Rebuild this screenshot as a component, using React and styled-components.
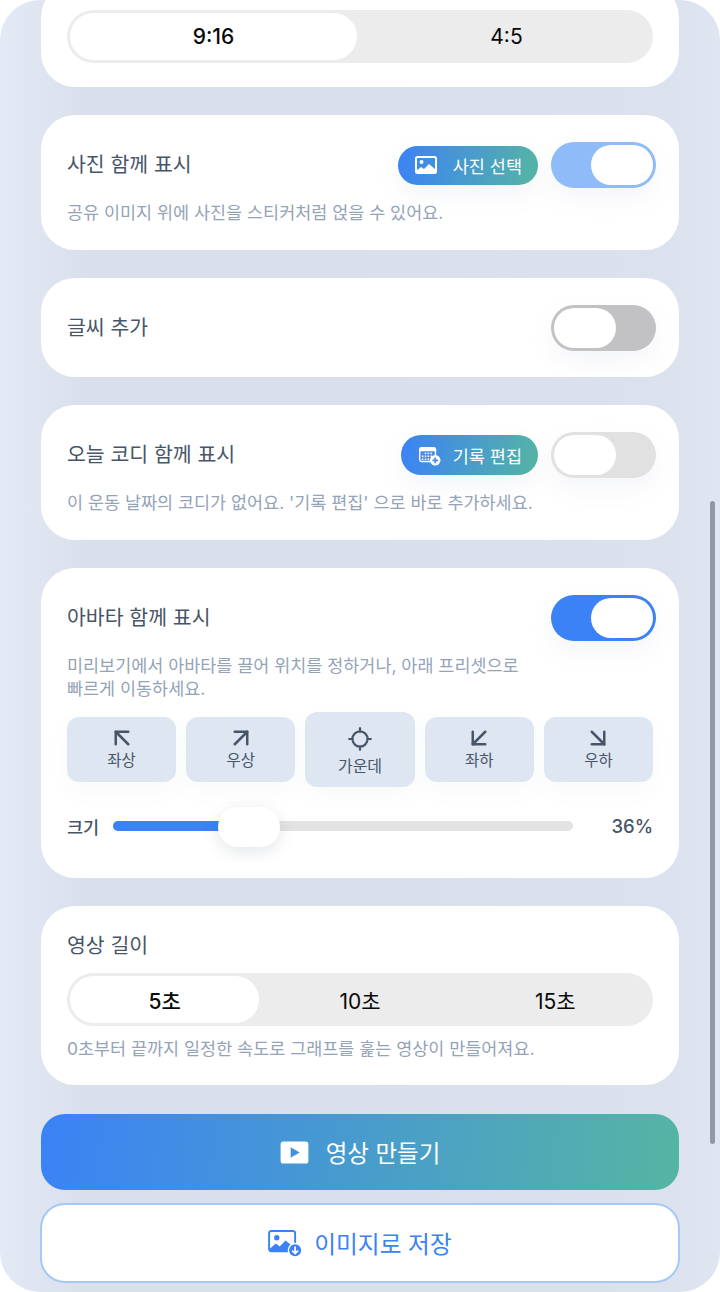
import React from 'react';
import styled, { createGlobalStyle } from 'styled-components';
import { ArrowUpLeft, ArrowUpRight, ArrowDownLeft, ArrowDownRight, Locate } from 'lucide-react';

const GlobalStyle = createGlobalStyle`
  html, body {
    margin: 0;
    padding: 0;
    background: #fff;
  }
  * {
    box-sizing: border-box;
  }
`;

const PhotoIcon = () => (
  <svg width="22" height="18" viewBox="0 0 22 18">
    <rect x="1" y="1" width="20" height="16" rx="1.5" fill="none" stroke="#fff" strokeWidth="2" />
    <circle cx="6.5" cy="6" r="2" fill="#fff" />
    <path d="M1 15l5-4 3 2 5-5 7 6v3H1z" fill="#fff" />
  </svg>
);

const CalendarIcon = () => (
  <svg width="23" height="21" viewBox="0 0 24 22">
    <rect x="1" y="2" width="18" height="16" rx="2.5" fill="#fff" />
    <rect x="2.5" y="6.5" width="15" height="10" rx="1" fill="#4a8ee4" />
    <g fill="#fff">
      <rect x="7" y="8" width="1.6" height="1.6" />
      <rect x="10" y="8" width="1.6" height="1.6" />
      <rect x="13" y="8" width="1.6" height="1.6" />
      <rect x="4" y="11" width="1.6" height="1.6" />
      <rect x="7" y="11" width="1.6" height="1.6" />
      <rect x="10" y="11" width="1.6" height="1.6" />
      <rect x="13" y="11" width="1.6" height="1.6" />
      <rect x="4" y="14" width="1.6" height="1.6" />
      <rect x="7" y="14" width="1.6" height="1.6" />
      <rect x="10" y="14" width="1.6" height="1.6" />
    </g>
    <circle cx="18" cy="16" r="5.5" fill="#fff" />
    <path d="M18 13v6M15 16h6" stroke="#4a8ee4" strokeWidth="1.8" />
  </svg>
);

const PlayIcon = () => (
  <svg width="29" height="23" viewBox="0 0 30 24">
    <rect x="0.5" y="0.5" width="29" height="23" rx="3" fill="#fff" />
    <path d="M11 6.5v11l9.5-5.5z" fill="#4390dc" />
  </svg>
);

const ImageSaveIcon = () => (
  <svg width="34" height="27" viewBox="0 0 35 28">
    <rect x="1" y="1" width="27" height="21" rx="2.5" fill="none" stroke="#3b82f6" strokeWidth="2" />
    <circle cx="9" cy="8" r="2.8" fill="#3b82f6" />
    <path d="M1 20l7-6 4 3 6-6 10 8v3H1z" fill="#3b82f6" />
    <circle cx="28" cy="21" r="7" fill="#3b82f6" stroke="#fff" strokeWidth="1.5" />
    <path d="M28 17v7M25 21.5l3 3 3-3" fill="none" stroke="#fff" strokeWidth="1.8" />
  </svg>
);

const presets = [
  { label: '좌상', Icon: ArrowUpLeft },
  { label: '우상', Icon: ArrowUpRight },
  { label: '가운데', Icon: Locate, active: true },
  { label: '좌하', Icon: ArrowDownLeft },
  { label: '우하', Icon: ArrowDownRight },
];

const App = () => (
  <Screen>
    <GlobalStyle />
    <Scroller>
      <Card $pad="27px 26px 24px">
        <Segment>
          <SegmentItem $selected>9:16</SegmentItem>
          <SegmentItem>4:5</SegmentItem>
        </Segment>
      </Card>

      <Card>
        <Row>
          <Title>사진 함께 표시</Title>
          <Actions>
            <PillButton>
              <PhotoIcon />
              사진 선택
            </PillButton>
            <Toggle $bg="#8fbcf8" $on />
          </Actions>
        </Row>
        <Hint $top="13px">공유 이미지 위에 사진을 스티커처럼 얹을 수 있어요.</Hint>
      </Card>

      <Card>
        <Row>
          <Title>글씨 추가</Title>
          <Toggle $bg="#c2c2c4" />
        </Row>
      </Card>

      <Card>
        <Row>
          <Title>오늘 코디 함께 표시</Title>
          <Actions>
            <PillButton $narrow>
              <CalendarIcon />
              기록 편집
            </PillButton>
            <Toggle $bg="#e1e1e1" />
          </Actions>
        </Row>
        <Hint $top="13px">이 운동 날짜의 코디가 없어요. '기록 편집' 으로 바로 추가하세요.</Hint>
      </Card>

      <Card $pad="27px 23px 32px 26px">
        <Row>
          <Title>아바타 함께 표시</Title>
          <Toggle $bg="#3b82f6" $on />
        </Row>
        <Hint $top="13px">
          미리보기에서 아바타를 끌어 위치를 정하거나, 아래 프리셋으로
          <br />
          빠르게 이동하세요.
        </Hint>
        <PresetGrid>
          {presets.map(({ label, Icon, active }) => (
            <Preset key={label} $active={active}>
              <Icon size={active ? 26 : 30} strokeWidth={2} />
              <span>{label}</span>
            </Preset>
          ))}
        </PresetGrid>
        <SliderRow>
          <SliderLabel>크기</SliderLabel>
          <Track>
            <Fill />
            <Thumb />
          </Track>
          <SliderValue>36%</SliderValue>
        </SliderRow>
      </Card>

      <Card $pad="27px 26px 25px">
        <Title>영상 길이</Title>
        <Segment $top="14px">
          <SegmentItem $selected>5초</SegmentItem>
          <SegmentItem>10초</SegmentItem>
          <SegmentItem>15초</SegmentItem>
        </Segment>
        <Hint $top="11px">0초부터 끝까지 일정한 속도로 그래프를 훑는 영상이 만들어져요.</Hint>
      </Card>

      <Bottom>
        <PrimaryButton>
          <PlayIcon />
          영상 만들기
        </PrimaryButton>
        <SecondaryButton>
          <ImageSaveIcon />
          이미지로 저장
        </SecondaryButton>
        <Footnote>만들어진 영상은 갤러리에 저장하거나 바로 공유할 수 있어요.</Footnote>
      </Bottom>
    </Scroller>
    <ScrollBar />
  </Screen>
);

const Screen = styled.div`
  position: relative;
  width: 720px;
  height: 1292px;
  overflow: hidden;
  border-radius: 40px;
  background: linear-gradient(90deg, #e3eaf5 0%, #d9e0ec 12%, #d9e0ec 50%, #dbe2ee 92%, #dfe6f2 100%);
  font-family: Inter, "Noto Sans CJK KR", sans-serif;
`;

const Scroller = styled.div`
  display: flex;
  flex-direction: column;
  gap: 28px;
  margin-top: -17px;
  padding: 0 41px;
`;

const Card = styled.section`
  padding: ${(p) => p.$pad || '27px 23px 26px 26px'};
  border-radius: 34px;
  background: #fff;
`;

const Row = styled.div`
  display: flex;
  align-items: center;
  justify-content: space-between;
  min-height: 46px;
`;

const Actions = styled.div`
  display: flex;
  align-items: center;
  gap: 13px;
`;

const Title = styled.h3`
  margin: 0;
  font-size: 20.5px;
  font-weight: 400;
  line-height: 26px;
  color: #475569;
`;

const Hint = styled.p`
  margin: ${(p) => p.$top || '0'} 0 0;
  font-size: 17.45px;
  font-weight: 400;
  line-height: 23px;
  white-space: nowrap;
  color: #94a3b8;
`;

const Segment = styled.div`
  display: flex;
  height: 53px;
  margin-top: ${(p) => p.$top || '0'};
  border-radius: 27px;
  background: #ececec;
`;

const SegmentItem = styled.div`
  flex: 1;
  display: flex;
  align-items: center;
  justify-content: center;
  border: 3px solid transparent;
  border-radius: 27px;
  background-clip: padding-box;
  font-size: 21px;
  font-weight: ${(p) => (p.$selected ? 500 : 400)};
  color: #0a0a0a;
  background-color: ${(p) => (p.$selected ? '#fff' : 'transparent')};
`;

const PillButton = styled.button`
  display: flex;
  align-items: center;
  gap: ${(p) => (p.$narrow ? '12px' : '16px')};
  height: ${(p) => (p.$narrow ? '40px' : '39px')};
  padding: 0 16px 0 17px;
  border: 0;
  border-radius: 20px;
  background: linear-gradient(100deg, #3b82f6, #55b5a3);
  font-family: inherit;
  font-size: 17.5px;
  font-weight: 400;
  color: #fff;
  box-shadow: 0 10px 24px rgba(110, 130, 160, 0.08);
`;

const Toggle = styled.div`
  position: relative;
  width: 105px;
  height: 46px;
  border-radius: 23px;
  background: ${(p) => p.$bg};
  box-shadow: 0 10px 24px rgba(110, 130, 160, 0.08);
  &::after {
    content: '';
    position: absolute;
    top: 3px;
    ${(p) => (p.$on ? 'right: 3px;' : 'left: 3px;')}
    width: 62px;
    height: 40px;
    border-radius: 20px;
    background: #fff;
  }
`;

const PresetGrid = styled.div`
  display: grid;
  grid-template-columns: repeat(5, 1fr);
  gap: 10px;
  align-items: center;
  height: 75px;
  margin: 12px 3px 0 0;
`;

const Preset = styled.button`
  display: flex;
  flex-direction: column;
  align-items: center;
  justify-content: center;
  gap: ${(p) => (p.$active ? '6px' : '0')};
  height: ${(p) => (p.$active ? '75px' : '65px')};
  padding: ${(p) => (p.$active ? '0' : '0 0 8px')};
  border: 0;
  border-radius: 12px;
  background: #dee6f2;
  font-family: inherit;
  font-size: ${(p) => (p.$active ? '16px' : '15.5px')};
  line-height: 16px;
  color: #475569;
  box-shadow: 0 8px 20px rgba(110, 130, 160, 0.05);
`;

const SliderRow = styled.div`
  display: flex;
  align-items: center;
  height: 40px;
  margin: 19px 3px 0 0;
`;

const SliderLabel = styled.span`
  width: 46px;
  font-size: 17.5px;
  font-weight: 500;
  color: #475569;
`;

const Track = styled.div`
  position: relative;
  width: 460px;
  height: 10px;
  border-radius: 5px;
  background: #e3e3e3;
`;

const Fill = styled.div`
  width: 23%;
  height: 100%;
  border-radius: 5px 0 0 5px;
  background: #3b82f6;
`;

const Thumb = styled.div`
  position: absolute;
  top: -14px;
  left: 105px;
  width: 62px;
  height: 40px;
  border-radius: 20px;
  background: #fff;
  box-shadow: 0 4px 16px rgba(60, 70, 90, 0.14);
`;

const SliderValue = styled.span`
  flex: 1;
  text-align: right;
  font-size: 18.5px;
  font-weight: 500;
  color: #475569;
`;

const Bottom = styled.div`
  display: flex;
  flex-direction: column;
  gap: 13px;
  margin-top: 1px;
`;

const PrimaryButton = styled.button`
  display: flex;
  align-items: center;
  justify-content: center;
  gap: 17px;
  height: 76px;
  border: 0;
  border-radius: 24px;
  background: linear-gradient(95deg, #3b82f6, #55b5a3);
  font-family: inherit;
  font-size: 23.5px;
  font-weight: 400;
  color: #fff;
`;

const SecondaryButton = styled.button`
  display: flex;
  align-items: center;
  justify-content: center;
  gap: 12px;
  height: 80px;
  margin: 0 -1px;
  border: 2px solid #a6c8f7;
  border-radius: 25px;
  background: #fff;
  font-family: inherit;
  font-size: 23.7px;
  font-weight: 400;
  color: #3b82f6;
`;

const Footnote = styled.p`
  margin: -5px 0 0;
  text-align: center;
  font-size: 15px;
  line-height: 20px;
  white-space: nowrap;
  color: #a9b2c0;
`;

const ScrollBar = styled.div`
  position: absolute;
  top: 501px;
  right: 5px;
  width: 5px;
  height: 643px;
  border-radius: 3px;
  background: #9298a5;
`;

export default App;
